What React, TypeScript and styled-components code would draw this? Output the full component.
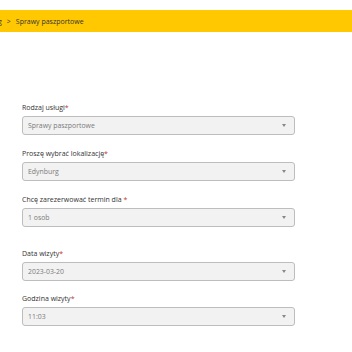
import React from "react";
import styled, { createGlobalStyle } from "styled-components";

const Global = createGlobalStyle`
  html, body { margin: 0; padding: 0; background: #ffffff; }
  body { font-family: "Open Sans", "Noto Sans", sans-serif; overflow: hidden; }
`;

const Page = styled.div`
  width: 352px;
  height: 352px;
  overflow: hidden;
  padding-top: 10px;
  box-sizing: border-box;
`;

const Breadcrumb = styled.nav`
  height: 22px;
  background: #ffc800;
  display: flex;
  align-items: center;
  gap: 5px;
  font-size: 7px;
  color: #333333;
  overflow: hidden;
  white-space: nowrap;
`;

const Crumb = styled.span<{ $clip?: boolean }>`
  margin-left: ${(p) => (p.$clip ? "-2px" : "0")};
`;

const Form = styled.div`
  padding: 71px 0 0 22px;
  display: flex;
  flex-direction: column;
`;

const Field = styled.div<{ $top: number }>`
  margin-top: ${(p) => p.$top}px;
  display: flex;
  flex-direction: column;
  gap: 3px;
`;

const Label = styled.label`
  font-size: 7px;
  line-height: 10px;
  color: #333333;
`;

const Req = styled.span`
  color: #c0392b;
`;

const Select = styled.div`
  width: 273px;
  height: 19px;
  box-sizing: border-box;
  border: 1px solid #bdbdbd;
  border-radius: 3px;
  background: #f2f2f2;
  display: flex;
  align-items: center;
  justify-content: space-between;
  padding: 0 8px 0 5px;
  font-size: 6.9px;
  color: #7a7a7a;
`;

const Caret = styled.span`
  width: 0;
  height: 0;
  border-left: 2.5px solid transparent;
  border-right: 2.5px solid transparent;
  border-top: 3px solid #888888;
`;

const fields = [
  { label: "Rodzaj usługi", req: "*", value: "Sprawy paszportowe", top: 0 },
  { label: "Proszę wybrać lokalizację", req: "*", value: "Edynburg", top: 14 },
  { label: "Chcę zarezerwować termin dla ", req: "*", value: "1 osob", top: 14 },
  { label: "Data wizyty", req: "*", value: "2023-03-20", top: 22 },
  { label: "Godzina wizyty", req: "*", value: "11:03", top: 13 },
];

export default function App() {
  return (
    <Page>
      <Global />
      <Breadcrumb>
        <Crumb $clip>g</Crumb>
        <Crumb>&gt;</Crumb>
        <Crumb>Sprawy paszportowe</Crumb>
      </Breadcrumb>
      <Form>
        {fields.map((f) => (
          <Field key={f.label} $top={f.top}>
            <Label>
              {f.label}
              <Req>{f.req}</Req>
            </Label>
            <Select>
              <span>{f.value}</span>
              <Caret />
            </Select>
          </Field>
        ))}
      </Form>
    </Page>
  );
}
